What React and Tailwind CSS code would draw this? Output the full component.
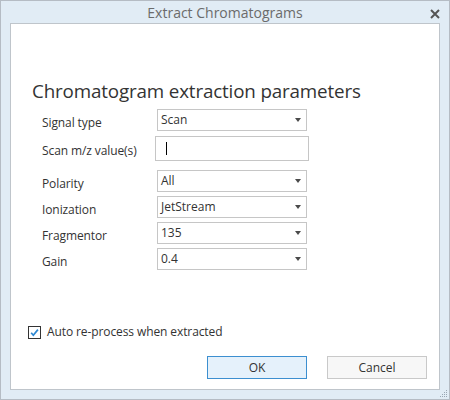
import React from 'react'

const font = { fontFamily: '"Open Sans", "Noto Sans", sans-serif' }

function Caret() {
  return (
    <svg className="w-[6px] h-[4px]" viewBox="0 0 6 4">
      <path d="M0 0h6L3 4z" fill="#4a4a4a" />
    </svg>
  )
}

function Select({ value }) {
  return (
    <div className="ml-[2px] w-[150px] h-[22px] border border-[#c6c6c6] bg-white flex items-center justify-between pl-[3px] pr-[5px] text-[12px] leading-[16px] text-[#333]">
      <span>{value}</span>
      <Caret />
    </div>
  )
}

function Row({ label, children, className = '' }) {
  return (
    <div className={`flex items-center ${className}`}>
      <div className="w-[113px] pt-[5px] text-[12px] leading-[16px] tracking-[-0.1px] text-[#333]">{label}</div>
      {children}
    </div>
  )
}

export default function App() {
  return (
    <div
      className="w-[450px] h-[400px] border border-[#b5bcc4] bg-[#e1ecf5] flex flex-col px-[9px] relative"
      style={font}
    >
      {/* title bar */}
      <div className="h-[22px] relative flex items-center justify-center text-[14px] text-[#6b6b6b]">
        Extract Chromatograms
        <svg className="absolute right-[0px] top-[8px] w-[10px] h-[10px]" viewBox="0 0 10 10">
          <path d="M1 1l8 8M9 1l-8 8" stroke="#555" strokeWidth="2" />
        </svg>
      </div>

      {/* dialog body */}
      <div className="h-[367px] border border-[#bfc5cb] bg-white flex flex-col pl-[21px]">
        <div className="mt-[54px] text-[18.8px] leading-[27px] text-[#333] tracking-[-0.15px]">
          Chromatogram extraction parameters
        </div>

        <div className="pl-[10px] mt-[4px] flex flex-col">
          <Row label="Signal type">
            <Select value="Scan" />
          </Row>
          <Row label="Scan m/z value(s)" className="mt-[5px]">
            <div className="w-[154px] h-[25px] border border-[#c6c6c6] flex items-center pl-[10px]">
              <span className="w-px h-[13px] bg-black" />
            </div>
          </Row>
          <Row label="Polarity" className="mt-[9px]">
            <Select value="All" />
          </Row>
          <Row label="Ionization" className="mt-[4px]">
            <Select value="JetStream" />
          </Row>
          <Row label="Fragmentor" className="mt-[4px]">
            <Select value="135" />
          </Row>
          <Row label="Gain" className="mt-[4px]">
            <Select value="0.4" />
          </Row>
        </div>

        <div className="mt-[53px] ml-[-4px] h-[18px] flex items-center gap-[6px] text-[12px] leading-[16px] tracking-[-0.1px] text-[#333]">
          <div className="w-[13px] h-[13px] border border-[#333] flex items-center justify-center">
            <svg className="w-[9px] h-[9px]" viewBox="0 0 9 9">
              <path d="M1.2 4.8l2.1 2.4L7.9 1.6" fill="none" stroke="#2b87d3" strokeWidth="1.7" />
            </svg>
          </div>
          <span>Auto re-process when extracted</span>
        </div>

        <div className="mt-[15px] flex justify-end gap-[20px] pr-[12px] text-[12px] text-[#333]">
          <button className="w-[100px] h-[23px] border border-[#3c8fd0] bg-[#e5f1fb]">OK</button>
          <button className="w-[100px] h-[23px] border border-[#c9c9c9] bg-[#f7f7f7]">Cancel</button>
        </div>
      </div>

      {/* resize grip */}
      <svg className="absolute right-[1px] bottom-[1px] w-[8px] h-[8px]" viewBox="0 0 8 8">
        <g fill="#9aa7b3">
          <rect x="6" y="0" width="1" height="1" />
          <rect x="4" y="2" width="1" height="1" />
          <rect x="6" y="2" width="1" height="1" />
          <rect x="2" y="4" width="1" height="1" />
          <rect x="4" y="4" width="1" height="1" />
          <rect x="6" y="4" width="1" height="1" />
          <rect x="0" y="6" width="1" height="1" />
          <rect x="2" y="6" width="1" height="1" />
          <rect x="4" y="6" width="1" height="1" />
          <rect x="6" y="6" width="1" height="1" />
        </g>
      </svg>
    </div>
  )
}
